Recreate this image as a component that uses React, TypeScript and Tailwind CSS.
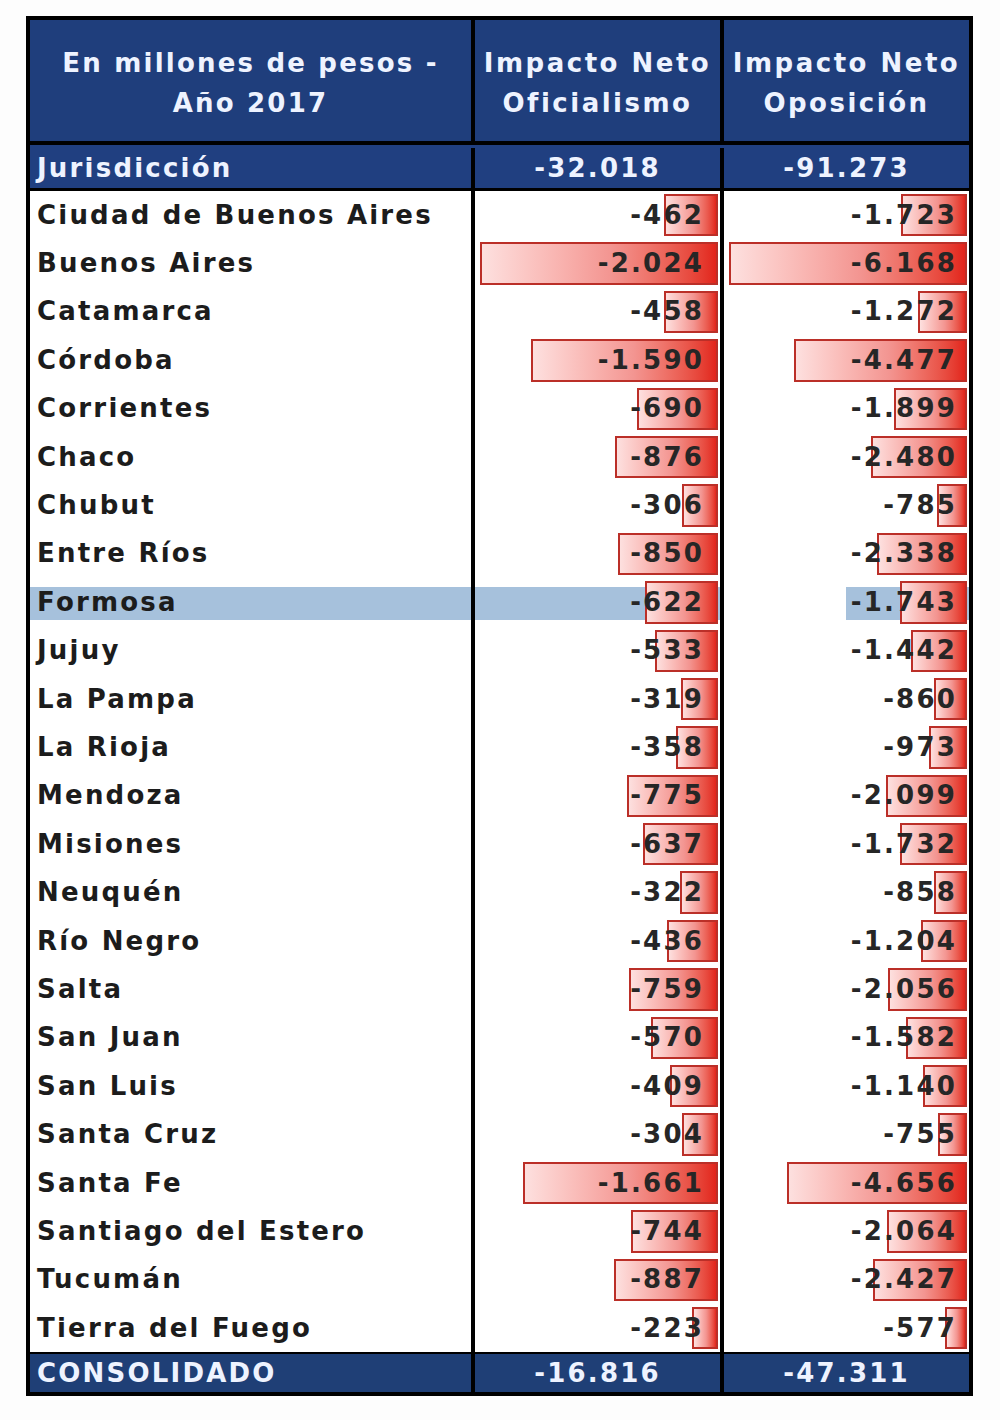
import React from "react";

type Row = [string, number, number];

const filas: Row[] = [
  ["Ciudad de Buenos Aires", 462, 1723],
  ["Buenos Aires", 2024, 6168],
  ["Catamarca", 458, 1272],
  ["Córdoba", 1590, 4477],
  ["Corrientes", 690, 1899],
  ["Chaco", 876, 2480],
  ["Chubut", 306, 785],
  ["Entre Ríos", 850, 2338],
  ["Formosa", 622, 1743],
  ["Jujuy", 533, 1442],
  ["La Pampa", 319, 860],
  ["La Rioja", 358, 973],
  ["Mendoza", 775, 2099],
  ["Misiones", 637, 1732],
  ["Neuquén", 322, 858],
  ["Río Negro", 436, 1204],
  ["Salta", 759, 2056],
  ["San Juan", 570, 1582],
  ["San Luis", 409, 1140],
  ["Santa Cruz", 304, 755],
  ["Santa Fe", 1661, 4656],
  ["Santiago del Estero", 744, 2064],
  ["Tucumán", 887, 2427],
  ["Tierra del Fuego", 223, 577],
];

const MAX_OF = 2024;
const MAX_OP = 6168;

const fmt = (n: number) =>
  n >= 1000
    ? `-${Math.floor(n / 1000)}.${String(n % 1000).padStart(3, "0")}`
    : `-${n}`;

const Bar = ({ value, max }: { value: number; max: number }) => (
  <div
    className="absolute top-[3px] bottom-[3px] right-[2px] border-2 border-[#bb2f28] bg-linear-to-r from-[#fde0df] via-[#f39591] via-55% to-[#e2231a]"
    style={{ width: (value / max) * 238 }}
  />
);

const ValueCell = ({
  value,
  max,
  highlight,
  last,
}: {
  value: number;
  max: number;
  highlight?: "full" | "text";
  last?: boolean;
}) => (
  <div
    className={
      "relative h-full flex items-center justify-end " +
      (last ? "w-[245px] pr-[12px]" : "w-[249px] pr-[16px] border-r-4 border-black")
    }
  >
    {highlight === "full" && (
      <div className="absolute left-0 right-0 top-[9px] bottom-[7px] bg-[#a6c1dc]" />
    )}
    {highlight === "text" && (
      <div className="absolute left-[122px] right-0 top-[9px] bottom-[7px] bg-[#a6c1dc]" />
    )}
    <Bar value={value} max={max} />
    <span className="relative text-[#262626]">{fmt(value)}</span>
  </div>
);

export default function App() {
  return (
    <div
      className="w-[1000px] h-[1420px] bg-[#fdfdfd] pt-[16px] pl-[26px]"
      style={{ fontFamily: '"DejaVu Sans", Verdana, sans-serif' }}
    >
      <div className="w-[947px] border-4 border-black font-bold text-[26px] tracking-[2.2px]">
        {/* Cabecera */}
        <div className="flex h-[121px] bg-[#1f3e7c] text-[#eef3ff] leading-[40px] text-center">
          <div className="w-[445px] border-r-4 border-black flex flex-col justify-center pt-[4px]">
            <span>En millones de pesos -</span>
            <span>Año 2017</span>
          </div>
          <div className="w-[249px] border-r-4 border-black flex flex-col justify-center pt-[4px] tracking-[2.5px] whitespace-nowrap">
            <span>Impacto Neto</span>
            <span>Oficialismo</span>
          </div>
          <div className="w-[245px] flex flex-col justify-center pt-[4px] tracking-[2.5px] whitespace-nowrap">
            <span>Impacto Neto</span>
            <span>Oposición</span>
          </div>
        </div>
        <div className="h-[4px] bg-black" />
        <div className="flex h-[43px] bg-[#203f80] text-[#eef3ff] pt-[3px]">
          <div className="w-[445px] border-r-4 border-black flex items-center pl-[7px]">
            Jurisdicción
          </div>
          <div className="w-[249px] border-r-4 border-black flex items-center justify-center">
            -32.018
          </div>
          <div className="w-[245px] flex items-center justify-center">-91.273</div>
        </div>
        <div className="h-[3px] bg-black" />

        {/* Filas */}
        <div className="bg-white">
          {filas.map(([nombre, of, op]) => {
            const sel = nombre === "Formosa";
            return (
              <div key={nombre} className="flex h-[48.4px]">
                <div className="relative w-[445px] h-full border-r-4 border-black flex items-center pl-[7px] text-[#1c1c1c]">
                  {sel && (
                    <div className="absolute left-0 right-0 top-[9px] bottom-[7px] bg-[#a6c1dc]" />
                  )}
                  <span className="relative">{nombre}</span>
                </div>
                <ValueCell value={of} max={MAX_OF} highlight={sel ? "full" : undefined} />
                <ValueCell value={op} max={MAX_OP} highlight={sel ? "text" : undefined} last />
              </div>
            );
          })}
        </div>

        <div className="h-[2px] bg-black" />
        <div className="flex h-[38px] bg-[#1f3f76] text-[#eef3ff]">
          <div className="w-[445px] border-r-4 border-black flex items-center pl-[7px]">
            CONSOLIDADO
          </div>
          <div className="w-[249px] border-r-4 border-black flex items-center justify-center">
            -16.816
          </div>
          <div className="w-[245px] flex items-center justify-center">-47.311</div>
        </div>
      </div>
    </div>
  );
}
